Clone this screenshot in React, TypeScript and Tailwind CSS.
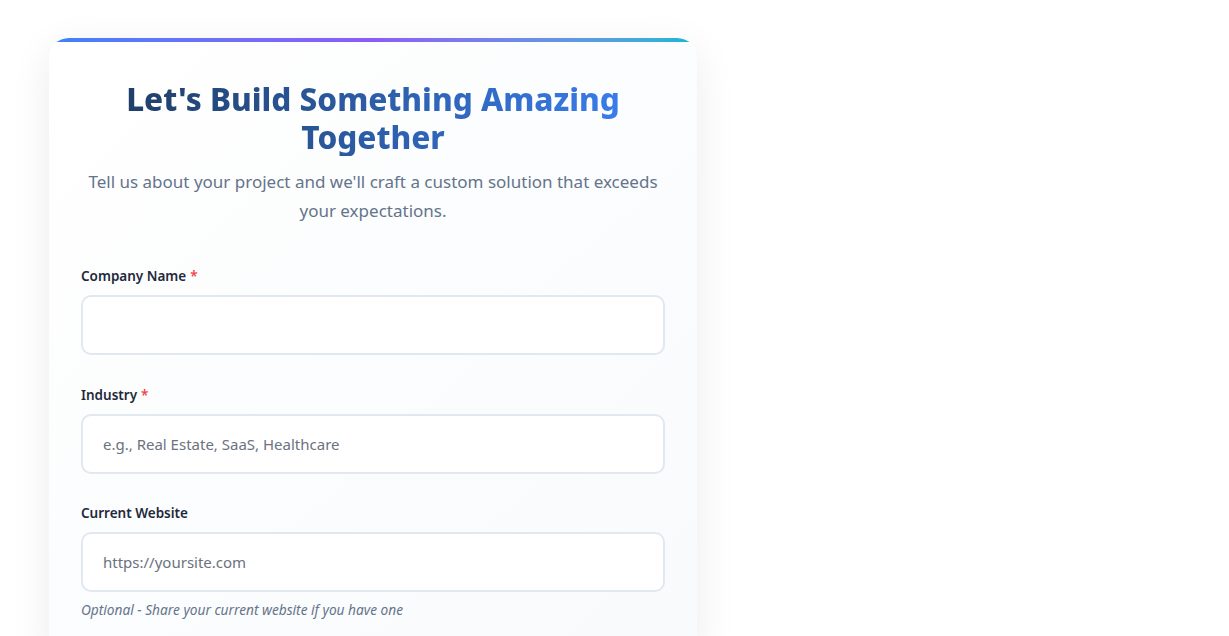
import React from 'react';

function Field({
  label,
  required,
  placeholder,
  hint,
}: {
  label: string;
  required?: boolean;
  placeholder?: string;
  hint?: string;
}) {
  return (
    <div className="flex flex-col">
      <label className="text-[13.5px] leading-[20px] font-semibold text-[#1e293b]">
        {label}
        {required && <span className="text-[#ef4444] ml-1">*</span>}
      </label>
      <input
        type="text"
        placeholder={placeholder}
        className="mt-[9px] h-[60px] w-full rounded-[10px] border-2 border-[#e2e8f0] bg-white px-5 text-[15px] text-[#1e293b] placeholder:text-[#6b7280] outline-none"
      />
      {hint && (
        <p className="mt-[8px] text-[13.7px] italic text-[#64748b]">{hint}</p>
      )}
    </div>
  );
}

export default function App() {
  return (
    <div
      className="min-h-screen bg-white pt-[38px] pl-[49px]"
      style={{ fontFamily: '"Noto Sans", "Open Sans", sans-serif' }}
    >
      {/* Form card */}
      <div className="w-[648px] overflow-hidden rounded-[20px] bg-gradient-to-br from-white to-[#f8fafc] shadow-[0_10px_40px_rgba(15,23,42,0.08)]">
        <div className="h-[4px] bg-gradient-to-r from-[#3b82f6] via-[#8b5cf6] to-[#06b6d4]" />
        <div className="px-8 pt-[38px] pb-10">
          <h1 className="text-center text-[31.5px] leading-[38px] font-extrabold bg-gradient-to-r from-[#1e3a5f] to-[#3b82f6] bg-clip-text text-transparent px-6">
            Let's Build Something Amazing Together
          </h1>
          <p className="mt-[11px] text-center text-[17px] leading-[29px] text-[#64748b]">
            Tell us about your project and we'll craft a custom solution that exceeds your expectations.
          </p>

          <div className="mt-[41px] flex flex-col gap-[29.5px]">
            <Field label="Company Name" required />
            <Field label="Industry" required placeholder="e.g., Real Estate, SaaS, Healthcare" />
            <Field
              label="Current Website"
              placeholder="https://yoursite.com"
              hint="Optional - Share your current website if you have one"
            />
          </div>
        </div>
      </div>
    </div>
  );
}
